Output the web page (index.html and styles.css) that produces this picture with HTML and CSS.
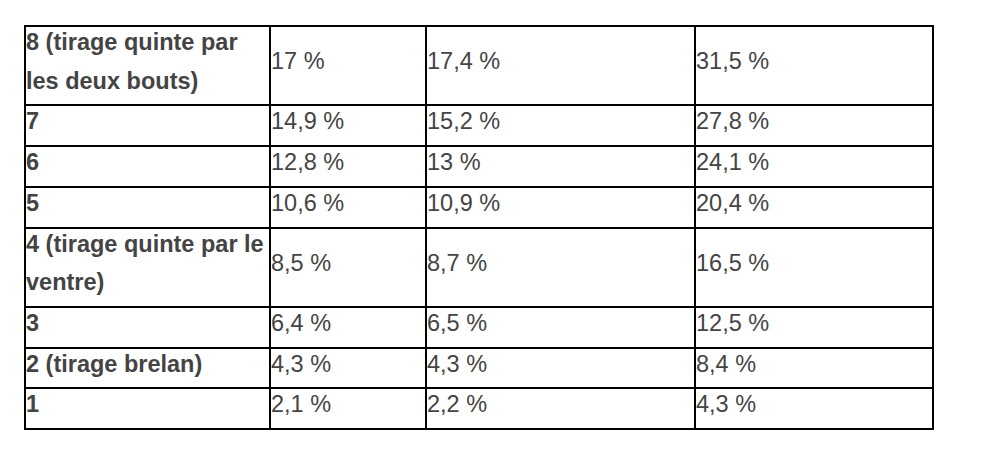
FILE: index.html
```html
<!doctype html>
<html>
<head>
<meta charset="utf-8">
<title>Tirages</title>
<link rel="stylesheet" href="styles.css">
</head>

<body>
<table class="odds">
	<colgroup>
		<col class="c1"><col class="c2"><col class="c3"><col class="c4">
	</colgroup>
	<tr><th><span>8 (tirage quinte par les deux bouts)</span></th><td><span>17 %</span></td><td><span>17,4 %</span></td><td><span>31,5 %</span></td></tr>
	<tr><th><span>7</span></th><td><span>14,9 %</span></td><td><span>15,2 %</span></td><td><span>27,8 %</span></td></tr>
	<tr><th><span>6</span></th><td><span>12,8 %</span></td><td><span>13 %</span></td><td><span>24,1 %</span></td></tr>
	<tr><th><span>5</span></th><td><span>10,6 %</span></td><td><span>10,9 %</span></td><td><span>20,4 %</span></td></tr>
	<tr><th><span>4 (tirage quinte par le ventre)</span></th><td><span>8,5 %</span></td><td><span>8,7 %</span></td><td><span>16,5 %</span></td></tr>
	<tr><th><span>3</span></th><td><span>6,4 %</span></td><td><span>6,5 %</span></td><td><span>12,5 %</span></td></tr>
	<tr><th><span>2 (tirage brelan)</span></th><td><span>4,3 %</span></td><td><span>4,3 %</span></td><td><span>8,4 %</span></td></tr>
	<tr><th><span>1</span></th><td><span>2,1 %</span></td><td><span>2,2 %</span></td><td><span>4,3 %</span></td></tr>
</table>
</body>
</html>
```

FILE: styles.css
```css
*{ margin:0; padding:0}
body{ background:#fff; font-family:"Liberation Sans", Arial, sans-serif; color:#444}

.odds{ margin:25px 0 0 24px; width:908px; table-layout:fixed; border-collapse:collapse; border:2px solid #000}
.odds .c1{ width:245px}
.odds .c2{ width:156px}
.odds .c3{ width:269px}
.odds .c4{ width:238px}
.odds th, .odds td{ border:2px solid #000; padding:0; font-size:23.5px; line-height:38.7px; text-align:left; vertical-align:middle}
.odds th{ font-weight:bold; vertical-align:top}
.odds span{ display:block; margin:-4px 0 4px}
```
